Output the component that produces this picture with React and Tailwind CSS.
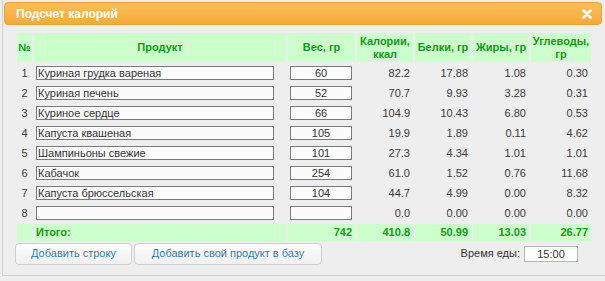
import React from "react";

const rows = [
  { n: 1, name: "Куриная грудка вареная", w: "60", cal: "82.2", p: "17.88", f: "1.08", c: "0.30" },
  { n: 2, name: "Куриная печень", w: "52", cal: "70.7", p: "9.93", f: "3.28", c: "0.31" },
  { n: 3, name: "Куриное сердце", w: "66", cal: "104.9", p: "10.43", f: "6.80", c: "0.53" },
  { n: 4, name: "Капуста квашеная", w: "105", cal: "19.9", p: "1.89", f: "0.11", c: "4.62" },
  { n: 5, name: "Шампиньоны свежие", w: "101", cal: "27.3", p: "4.34", f: "1.01", c: "1.01" },
  { n: 6, name: "Кабачок", w: "254", cal: "61.0", p: "1.52", f: "0.76", c: "11.68" },
  { n: 7, name: "Капуста брюссельская", w: "104", cal: "44.7", p: "4.99", f: "0.00", c: "8.32" },
  { n: 8, name: "", w: "", cal: "0.0", p: "0.00", f: "0.00", c: "0.00" },
];

const th = "bg-[#ccffcc] text-[#129a12] font-bold text-center align-middle leading-[13px] p-0";
const num = "text-right pr-[3px] text-[#3a3a3a] align-middle p-0";
const tot = "bg-[#ccffcc] text-[#129a12] font-bold text-right pr-[3px] p-0";

export default function App() {
  return (
    <div className="w-[605px] h-[281px] bg-[#eeeeee] overflow-hidden text-[11px] text-[#333]" style={{ fontFamily: '"Liberation Sans", Arial, sans-serif' }}>
      <div className="ml-[2px] w-[603px] h-[276px] border-l border-b border-[#d2d2d2] pt-[2px]">
        {/* title bar */}
        <div className="ml-[1px] w-[598px] h-[23px] rounded-[4px] border border-[#eba335] bg-gradient-to-b from-[#f9bf58] to-[#f5aa3a] flex items-center justify-between pl-[11px] pr-[9px]">
          <span className="text-white font-bold text-[12px]">Подсчет калорий</span>
          <svg width="10" height="10" viewBox="0 0 10 10">
            <path d="M1.5 1.5 L8.5 8.5 M8.5 1.5 L1.5 8.5" stroke="#fff" strokeWidth="2.6" strokeLinecap="round" />
          </svg>
        </div>

        <table className="ml-[12px] mt-[6px] border-separate border-spacing-[2px] table-fixed w-[578px]">
          <colgroup>
            <col className="w-[15px]" />
            <col className="w-[252px]" />
            <col className="w-[67px]" />
            <col className="w-[56px]" />
            <col className="w-[56px]" />
            <col className="w-[56px]" />
            <col className="w-[60px]" />
          </colgroup>
          <thead>
            <tr className="h-[29px]">
              <th className={th}>№</th>
              <th className={th}>Продукт</th>
              <th className={th}>Вес, гр</th>
              <th className={th}>Калории,<br />ккал</th>
              <th className={th}>Белки, гр</th>
              <th className={th}>Жиры, гр</th>
              <th className={th}>Углеводы,<br />гр</th>
            </tr>
          </thead>
          <tbody>
            {rows.map((r) => (
              <tr key={r.n} className="h-[18px]">
                <td className="text-center text-[#3a3a3a] p-0">{r.n}</td>
                <td className="p-0 pl-[2px]">
                  <div className="w-[238px] h-[14px] border border-[#7a7a7a] bg-[#fbfbfb] pl-[1px] leading-[12px] text-[#333] overflow-hidden whitespace-nowrap">{r.name}</div>
                </td>
                <td className="p-0 pl-[2px]">
                  <div className="w-[62px] h-[14px] border border-[#7a7a7a] bg-[#fbfbfb] leading-[12px] text-center text-[#333]">{r.w}</div>
                </td>
                <td className={num}>{r.cal}</td>
                <td className={num}>{r.p}</td>
                <td className={num}>{r.f}</td>
                <td className={num}>{r.c}</td>
              </tr>
            ))}
            <tr className="h-[16px]">
              <td className="bg-[#ccffcc] p-0"></td>
              <td className="bg-[#ccffcc] text-[#129a12] font-bold pl-[2px] p-0">Итого:</td>
              <td className={tot}>742</td>
              <td className={tot}>410.8</td>
              <td className={tot}>50.99</td>
              <td className={tot}>13.03</td>
              <td className={tot}>26.77</td>
            </tr>
          </tbody>
        </table>

        <div className="flex items-center ml-[12px] h-[22px]">
          <button className="w-[117px] h-[22px] rounded-[4px] border border-[#cfcfcf] bg-gradient-to-b from-[#fdfdfd] to-[#f0f0f0] text-[#2f7db8] text-[11px]">
            Добавить строку
          </button>
          <button className="ml-[2px] w-[188px] h-[22px] rounded-[4px] border border-[#cfcfcf] bg-gradient-to-b from-[#fdfdfd] to-[#f0f0f0] text-[#2f7db8] text-[11px]">
            Добавить свой продукт в базу
          </button>
          <div className="ml-auto mr-[27px] flex items-center">
            <span className="text-[#333]">Время еды:</span>
            <div className="ml-[4px] w-[54px] h-[16px] border border-[#a9bfa9] bg-white text-center leading-[14px] text-[#333]">15:00</div>
          </div>
        </div>
      </div>
    </div>
  );
}
